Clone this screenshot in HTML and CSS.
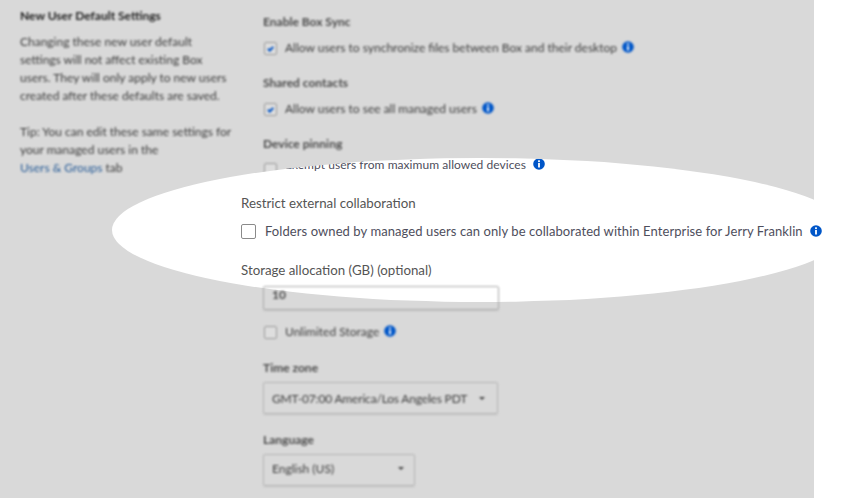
FILE: index.html
```html
<!DOCTYPE html>
<html lang="en">
<head>
<meta charset="utf-8">
<title>New User Default Settings</title>
<link rel="stylesheet" href="styles.css">
</head>
<body>
<svg class="defs" width="0" height="0" aria-hidden="true">
  <symbol id="info" viewBox="0 0 12 12">
    <circle cx="6" cy="6" r="5.8" fill="#0056c8"/>
    <rect x="5.1" y="2.3" width="1.8" height="1.7" fill="#fff"/>
    <rect x="5.1" y="4.9" width="1.8" height="4.6" fill="#fff"/>
  </symbol>
  <symbol id="tick" viewBox="0 0 12 12">
    <path d="M3.2 6.2l2 2 3.8-4" fill="none" stroke="#0052c4" stroke-width="2.2"/>
  </symbol>
</svg>
<main class="panel">
  <aside class="intro blur">
    <h2 class="intro-title">New User Default Settings</h2>
    <p class="intro-text">Changing these new user default settings will not affect existing Box users. They will only apply to new users created after these defaults are saved.</p>
    <p class="intro-text">Tip: You can edit these same settings for your managed users in the<br><a class="link">Users &amp; Groups</a> tab</p>
  </aside>
  <section class="form">
    <h3 class="label blur first">Enable Box Sync</h3>
    <div class="check-row blur">
      <span class="box"><svg class="tick"><use href="#tick"/></svg></span>
      <span>Allow users to synchronize files between Box and their desktop</span>
      <svg class="info"><use href="#info"/></svg>
    </div>
    <h3 class="label blur">Shared contacts</h3>
    <div class="check-row blur">
      <span class="box"><svg class="tick"><use href="#tick"/></svg></span>
      <span>Allow users to see all managed users</span>
      <svg class="info"><use href="#info"/></svg>
    </div>
    <h3 class="label blur">Device pinning</h3>
    <span class="box device-box blur"></span>
    <div class="text-input blur">10</div>
    <div class="check-row unlimited blur">
      <span class="box"></span>
      <span>Unlimited Storage</span>
      <svg class="info"><use href="#info"/></svg>
    </div>
    <h3 class="label blur zone-label">Time zone</h3>
    <div class="select zone blur"><span>GMT-07:00 America/Los Angeles PDT</span><i class="caret"></i></div>
    <h3 class="label blur language-label">Language</h3>
    <div class="select language blur"><span>English (US)</span><i class="caret"></i></div>
  </section>
</main>
<div class="spotlight">
  <div class="device-row">
    <span>Exempt users from maximum allowed devices</span>
    <svg class="info"><use href="#info"/></svg>
  </div>
  <h3 class="spot-label restrict">Restrict external collaboration</h3>
  <div class="spot-row">
    <span class="spot-box"></span>
    <span>Folders owned by managed users can only be collaborated within Enterprise for Jerry Franklin</span>
    <svg class="info"><use href="#info"/></svg>
  </div>
  <h3 class="spot-label storage">Storage allocation (GB) (optional)</h3>
</div>
</body>
</html>
```

FILE: styles.css
```css
html, body {
  margin: 0;
  height: 498px;
  overflow: hidden;
  background: #fff;
  font-family: Lato, "Liberation Sans", sans-serif;
}
.defs { display: block; height: 0; }
.blur { filter: blur(0.8px); }
.panel {
  width: 814px;
  height: 498px;
  background: #d9d9d9;
  display: flex;
  color: #3c3c3c;
  font-size: 12px;
}
.intro { width: 263px; box-sizing: border-box; padding: 8px 0 0 20px; flex: none; }
.intro-title { margin: 0 0 10px; font-size: 12px; line-height: 15px; font-weight: 700; color: #1c1c1c; }
.intro-text { margin: 0 0 18px; width: 215px; line-height: 18px; color: #3c3c3c; }
.link { color: #255a96; }
.form { display: flex; flex-direction: column; align-items: flex-start; }
.label { margin: 21px 0 0; font-size: 12px; line-height: 15px; font-weight: 700; color: #4a4a4a; }
.label.first { margin-top: 14px; }
.check-row { display: flex; align-items: center; height: 14px; margin-top: 11px; white-space: nowrap; color: #3c3c3c; }
.box {
  width: 11px; height: 11px; flex: none; margin: 2px 8px 0 1px;
  border: 1px solid #999; border-radius: 2px; display: flex; background: #dedede;
}
.tick { width: 11px; height: 11px; }
.info { width: 12px; height: 12px; flex: none; margin-left: 5px; }
.device-box { margin-top: 12px; }
.text-input {
  z-index: 2;
  width: 236px; height: 24px; box-sizing: border-box; margin-top: 110px;
  border: 1px solid #aaa; border-radius: 2px; padding: 0 8px;
  display: flex; align-items: flex-start; line-height: 16px; font-weight: 700; color: #4a4a4a; box-shadow: 0 1px 1px #c4c4c4;
}
.unlimited { margin-top: 14px; }
.check-row + .zone-label { margin-top: 22px; }
.select {
  height: 32px; box-sizing: border-box; margin-top: 7px; padding: 0 12px 0 8px;
  border: 1px solid #b5b5b5; border-radius: 2px; box-shadow: 0 1px 1px #c4c4c4;
  display: flex; align-items: center; justify-content: space-between; color: #3c3c3c;
}
.zone { width: 235px; letter-spacing: -0.18px; }
.language { width: 152px; padding-right: 10px; padding-bottom: 3px; }
.language-label { margin-top: 18px; }
.caret { width: 0; height: 0; border: 3px solid transparent; border-top: 3px solid #444; border-bottom: 0; }
.spotlight {
  position: absolute;
  left: 112px; top: 158px;
  width: 736px; height: 144px;
  box-sizing: border-box;
  padding-left: 129px;
  background: #fff;
  border-radius: 50%;
  overflow: hidden;
  z-index: 1;
  color: #4e4e5c;
  font-size: 13px;
  letter-spacing: 0.08px;
}
.device-row {
  display: flex; align-items: center; height: 12px; margin-left: 44px;
  white-space: nowrap; font-size: 12px; letter-spacing: 0.05px;
}
.device-row .info { margin-left: 7px; }
.spot-label { margin: 0; font-size: 13.3px; line-height: 16px; font-weight: 400; color: #555; letter-spacing: 0; }
.restrict { margin-top: 25px; }
.spot-row { display: flex; align-items: center; height: 16px; margin-top: 12px; white-space: nowrap; }
.spot-box { width: 13px; height: 13px; flex: none; margin-right: 9px; border: 1px solid #8a8a8a; border-radius: 2px; }
.spot-row .info { margin-left: 7px; }
.storage { margin-top: 23px; }
```
